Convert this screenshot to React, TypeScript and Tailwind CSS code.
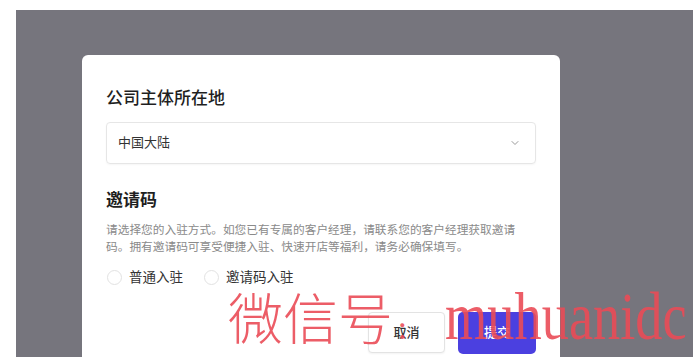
import { ChevronDown } from "lucide-react";

export default function App() {
  return (
    <div className="relative h-[357px] w-[700px] overflow-hidden bg-white font-['Inter','Noto_Sans_CJK_SC',sans-serif]">
      {/* 遮罩层 */}
      <div className="ml-[16px] mr-[7px] mt-[10px] h-[347px] bg-[#76757d] pl-[66px] pt-[45px]">
        {/* 弹窗 */}
        <div className="w-[478px] rounded-[6px] bg-white px-6 pb-6 pt-[31px]">
          <h2 className="text-[17px] font-medium leading-[24px] text-[#1f1f1f]">
            公司主体所在地
          </h2>
          <div className="mt-3 flex h-[42px] items-center justify-between rounded-[4px] border border-[#e6e6e6] pl-[11px] pr-[14px] shadow-[0_1px_2px_rgba(0,0,0,0.04)]">
            <span className="text-[13px] text-[#333]">中国大陆</span>
            <ChevronDown className="h-3 w-3 text-[#9a9a9a]" strokeWidth={2} />
          </div>

          <h2 className="mt-6 text-[17px] font-semibold leading-[24px] text-[#1f1f1f]">
            邀请码
          </h2>
          <p className="mt-[10px] whitespace-nowrap text-[11.7px] leading-[17px] text-[#8a8a8a]">
            请选择您的入驻方式。如您已有专属的客户经理，请联系您的客户经理获取邀请
            <br />
            码。拥有邀请码可享受便捷入驻、快速开店等福利，请务必确保填写。
          </p>

          <div className="mt-[11px] flex h-5 items-center">
            <RadioItem label="普通入驻" />
            <div className="ml-[20px]">
              <RadioItem label="邀请码入驻" />
            </div>
          </div>

          <div className="mt-[25px] flex justify-end gap-[13px]">
            <button className="h-[41px] w-[77px] rounded-[4px] border border-[#e3e3e3] bg-white text-[13px] font-medium text-[#333] shadow-[0_1px_2px_rgba(0,0,0,0.05)]">
              取消
            </button>
            <button className="h-[42px] w-[78px] rounded-[5px] bg-[#4b40e0] text-[13px] font-medium text-white">
              提交
            </button>
          </div>
        </div>
      </div>

      {/* 水印 */}
      <div className="pointer-events-none absolute left-[228px] top-[288px] flex w-[600px] items-baseline whitespace-nowrap text-[#ea4b56]/90">
        <span className="w-[165px] shrink-0 text-[55px] font-light leading-[55px] font-['Noto_Sans_CJK_SC',serif]">
          微信号
        </span>
        <span className="w-[52px] shrink-0 pl-[5px] text-[30px] leading-[55px] font-['Inter',sans-serif]">
          :
        </span>
        <span className="inline-block shrink-0 origin-left scale-x-[0.8] text-[68px] leading-[55px] font-['Liberation_Serif',serif]">
          muhuanidc
        </span>
      </div>
    </div>
  );
}

function RadioItem({ label }: { label: string }) {
  return (
    <label className="flex items-center">
      <span className="ml-[1px] h-[15px] w-[15px] rounded-full border border-[#e2e2e2] bg-white" />
      <span className="ml-[7px] text-[13.5px] text-[#333]">{label}</span>
    </label>
  );
}
